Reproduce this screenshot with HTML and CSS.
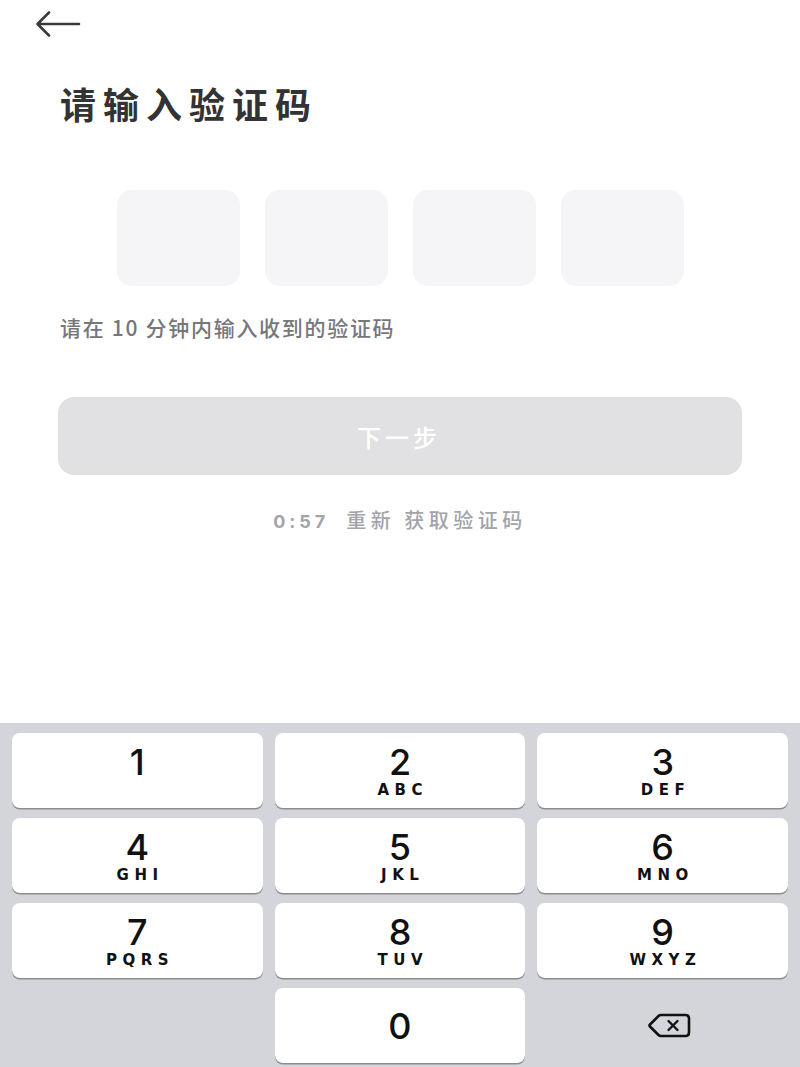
FILE: index.html
```html
<!DOCTYPE html>
<html lang="zh-CN">
<head>
<meta charset="utf-8">
<title>请输入验证码</title>
<link rel="stylesheet" href="styles.css">
</head>
<body>
<div class="screen">
  <header class="topbar">
    <svg class="back" width="46" height="28" viewBox="0 0 46 28">
      <path d="M44 14 H3 M14 2.5 L2.5 14 L14 25.5" fill="none" stroke="#3a3a3a" stroke-width="2.6" stroke-linecap="round" stroke-linejoin="round"/>
    </svg>
  </header>
  <h1 class="title">请输入验证码</h1>
  <div class="codes">
    <div class="code"></div>
    <div class="code"></div>
    <div class="code"></div>
    <div class="code"></div>
  </div>
  <p class="hint">请在 10 分钟内输入收到的验证码</p>
  <button class="next">下一步</button>
  <p class="resend"><span class="count">0:57</span> 重新 获取验证码</p>
  <div class="keyboard">
    <div class="key"><span class="num">1</span><span class="letters">&nbsp;</span></div>
    <div class="key"><span class="num">2</span><span class="letters">ABC</span></div>
    <div class="key"><span class="num">3</span><span class="letters">DEF</span></div>
    <div class="key"><span class="num">4</span><span class="letters">GHI</span></div>
    <div class="key"><span class="num">5</span><span class="letters">JKL</span></div>
    <div class="key"><span class="num">6</span><span class="letters">MNO</span></div>
    <div class="key"><span class="num">7</span><span class="letters">PQRS</span></div>
    <div class="key"><span class="num">8</span><span class="letters">TUV</span></div>
    <div class="key"><span class="num">9</span><span class="letters">WXYZ</span></div>
    <div class="key blank"></div>
    <div class="key zero"><span class="num">0</span></div>
    <div class="key blank del">
      <svg width="44" height="25" viewBox="0 0 44 25">
        <path d="M14 2 H38.5 Q42 2 42 5.5 V19.5 Q42 23 38.5 23 H14 Q12.5 23 11.5 22 L3 13.5 Q2 12.5 3 11.5 L11.5 3 Q12.5 2 14 2 Z" fill="none" stroke="#111" stroke-width="2.6" stroke-linejoin="round"/>
        <path d="M21.5 8 L30.5 17 M30.5 8 L21.5 17" stroke="#111" stroke-width="2.4" stroke-linecap="round"/>
      </svg>
    </div>
  </div>
</div>
</body>
</html>
```
FILE: styles.css
```css
* { box-sizing: border-box; }
html, body { margin: 0; padding: 0; background: #fff; }
body {
  font-family: "Noto Sans CJK SC", "Noto Sans", sans-serif;
  color: #333;
}
.screen {
  height: 1067px;
  display: flex;
  flex-direction: column;
  overflow: hidden;
}
.topbar {
  height: 48px;
  padding: 10px 0 0 35px;
}
.back { display: block; }
.title {
  margin: 35px 0 0 60px;
  font-size: 36px;
  line-height: 40px;
  font-weight: 700;
  letter-spacing: 7px;
  color: #333;
}
.codes {
  display: flex;
  justify-content: center;
  gap: 25px;
  margin-top: 67px;
}
.code {
  width: 123px;
  height: 96px;
  border-radius: 15px;
  background: #f5f5f7;
}
.hint {
  margin: 29px 0 0 60px;
  font-size: 21px;
  line-height: 24px;
  letter-spacing: 1.7px;
  font-weight: 500;
  color: #76767b;
}
.next {
  display: block;
  margin: 58px 58px 0;
  height: 78px;
  border: none;
  border-radius: 16px;
  background: #e1e1e3;
  color: #fff;
  font-family: inherit;
  font-size: 24px;
  font-weight: 500;
  letter-spacing: 4px;
  padding-left: 4px;
}
.resend {
  margin: 31px 0 0;
  text-align: center;
  font-size: 20px;
  line-height: 28px;
  letter-spacing: 4.5px;
  font-weight: 500;
  color: #a3a3aa;
  word-spacing: 0;
}
.count {
  font-family: "Inter", "Liberation Sans", sans-serif;
  font-size: 18px;
  font-weight: 700;
  letter-spacing: 4px;
  margin-right: 8px;
}
.keyboard {
  margin-top: auto;
  background: #d4d5da;
  display: grid;
  grid-template-columns: repeat(3, 1fr);
  grid-auto-rows: 75px;
  gap: 10px 12px;
  padding: 10px 12px 4px;
  height: 344px;
}
.key {
  background: #fff;
  border-radius: 8px;
  box-shadow: 0 1.5px 0 #8c8c90;
  display: flex;
  flex-direction: column;
  align-items: center;
  justify-content: flex-start;
  padding-top: 9px;
  color: #111;
}
.num {
  font-family: "Inter", "Liberation Sans", sans-serif;
  font-size: 36px;
  line-height: 40px;
  font-weight: 500;
}
.letters {
  font-family: "DejaVu Sans", "Liberation Sans", sans-serif;
  font-size: 15px;
  line-height: 14px;
  font-weight: 700;
  letter-spacing: 5.5px;
  margin-left: 5.5px;
  margin-top: 1px;
}
.key.zero { justify-content: center; padding-top: 0; }
.key.blank {
  background: transparent;
  box-shadow: none;
}
.key.del { justify-content: center; padding-top: 0; padding-left: 12px; }
```
